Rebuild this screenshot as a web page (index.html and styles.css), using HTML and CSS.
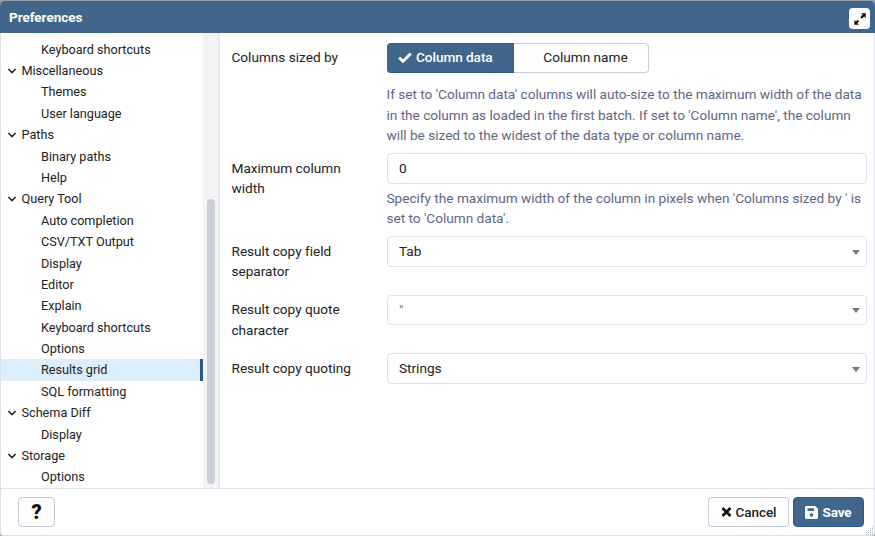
FILE: index.html
```
<!DOCTYPE html>
<html lang="en">
<head>
<meta charset="utf-8">
<title>Preferences</title>
<link rel="stylesheet" href="styles.css">
</head>
<body>
<svg class="defs" aria-hidden="true">
  <symbol id="chev" viewBox="0 0 10 8"><path d="M1.4 2 5 5.6 8.6 2" fill="none" stroke="#222" stroke-width="1.5"/></symbol>
</svg>
<div class="dialog">
  <header class="titlebar">
    <span class="title">Preferences</span>
    <button class="expand" aria-label="Maximize">
      <svg width="14" height="14" viewBox="0 0 14 14"><path d="M8.1 1.3h4.6v4.6l-1.5-1.5-2.4 2.4-1.6-1.6 2.4-2.4zM5.9 12.7H1.3V8.1l1.5 1.5 1.8-1.8 1.6 1.6-1.8 1.8z" fill="#111"/></svg>
    </button>
  </header>
  <main class="content">
    <nav class="tree">
      <div class="leaf">Keyboard shortcuts</div>
      <div class="node"><svg><use href="#chev"/></svg>Miscellaneous</div>
      <div class="leaf">Themes</div>
      <div class="leaf">User language</div>
      <div class="node"><svg><use href="#chev"/></svg>Paths</div>
      <div class="leaf">Binary paths</div>
      <div class="leaf">Help</div>
      <div class="node"><svg><use href="#chev"/></svg>Query Tool</div>
      <div class="leaf">Auto completion</div>
      <div class="leaf">CSV/TXT Output</div>
      <div class="leaf">Display</div>
      <div class="leaf">Editor</div>
      <div class="leaf">Explain</div>
      <div class="leaf">Keyboard shortcuts</div>
      <div class="leaf">Options</div>
      <div class="leaf selected">Results grid</div>
      <div class="leaf">SQL formatting</div>
      <div class="node"><svg><use href="#chev"/></svg>Schema Diff</div>
      <div class="leaf">Display</div>
      <div class="node"><svg><use href="#chev"/></svg>Storage</div>
      <div class="leaf">Options</div>
    </nav>
    <div class="track"><div class="thumb"></div></div>
    <form class="form">
      <div class="row">
        <label>Columns sized by</label>
        <div>
          <div class="toggle">
            <span class="opt on"><svg width="14" height="12" viewBox="0 0 14 12"><path d="M1.2 5.7 5 9.3 12.8 1.5" fill="none" stroke="#fff" stroke-width="2.8"/></svg>Column data</span>
            <span class="opt">Column name</span>
          </div>
          <p class="help toggle-help">If set to 'Column data' columns will auto-size to the maximum width of the data<br>in the column as loaded in the first batch. If set to 'Column name', the column<br>will be sized to the widest of the data type or column name.</p>
        </div>
      </div>
      <div class="row">
        <label>Maximum column<br>width</label>
        <div>
          <div class="field">0</div>
          <p class="help">Specify the maximum width of the column in pixels when 'Columns sized by ' is<br>set to 'Column data'.</p>
        </div>
      </div>
      <div class="row">
        <label>Result copy field<br>separator</label>
        <div class="field select">Tab</div>
      </div>
      <div class="row">
        <label>Result copy quote<br>character</label>
        <div class="field select quote">"</div>
      </div>
      <div class="row">
        <label>Result copy quoting</label>
        <div class="field select">Strings</div>
      </div>
    </form>
  </main>
  <footer class="footer">
    <button class="btn helpbtn">?</button>
    <div class="actions">
      <button class="btn cancel"><svg width="11" height="12" viewBox="0 0 11 12"><path d="M1.5 2 9.5 10M9.5 2 1.5 10" stroke="#111" stroke-width="2.7"/></svg>Cancel</button>
      <button class="btn save"><svg width="13" height="13" viewBox="0 0 13 13"><path fill="#fff" fill-rule="evenodd" d="M1.5 0h8.7L13 2.8v8.7a1.5 1.5 0 0 1-1.5 1.5h-10A1.5 1.5 0 0 1 0 11.5V1.5A1.5 1.5 0 0 1 1.5 0zM2.5 2.3v2.7h6.5V2.3zM6.5 7.2a1.8 1.8 0 1 0 0 3.6 1.8 1.8 0 0 0 0-3.6z"/></svg>Save</button>
    </div>
  </footer>
  <svg class="grip" width="9" height="9" viewBox="0 0 9 9" fill="#aaacb0"><path d="M7 0h1v1H7zM5 2h1v1H5zM7 2h1v1H7zM3 4h1v1H3zM5 4h1v1H5zM7 4h1v1H7zM1 6h1v1H1zM3 6h1v1H3zM5 6h1v1H5zM7 6h1v1H7zM1 8h1v1H1zM3 8h1v1H3zM5 8h1v1H5zM7 8h1v1H7z"/></svg>
</div>
</body>
</html>
```
FILE: styles.css
```
* { box-sizing: border-box; }
body { margin: 0; background: #999da1; font-family: Roboto, "Liberation Sans", sans-serif; font-size: 13.65px; letter-spacing: -0.02px; color: #222; }
.defs { position: absolute; width: 0; height: 0; }
.dialog { position: relative; width: 875px; height: 536px; padding-top: 1px; display: flex; flex-direction: column; }
.titlebar { height: 32px; flex: none; display: flex; align-items: center; justify-content: space-between; padding: 0 5px 0 9px; background: #40668c; border-radius: 5px 5px 0 0; color: #fff; }
.title { font-size: 13.5px; font-weight: 700; letter-spacing: -0.03px; line-height: 30px; }
.expand { width: 21px; height: 21px; margin-top: 3px; padding: 0; border: 0; border-radius: 4px; background: #fff; display: flex; align-items: center; justify-content: center; }
.content { height: 455px; flex: none; display: flex; background: #fff; border: solid #dde0e6; border-width: 0 1px; }
.tree { width: 202px; padding-top: 5.6px; font-size: 12.7px; letter-spacing: -0.02px; }
.leaf, .node { height: 21.4px; line-height: 21.4px; white-space: nowrap; }
.leaf { padding-left: 40px; }
.node { display: flex; align-items: center; padding-left: 6px; gap: 4.5px; }
.node svg { width: 10px; height: 8px; }
.selected { background: #dceefa; border-right: 3px solid #2c5a87; }
.track { width: 17px; padding: 166px 0 4px 4px; background: #f2f3f5; border-right: 2px solid #e8e9ef; }
.thumb { width: 8px; height: 285px; border-radius: 4px; background: #c9ced7; }
.form { flex: 1; padding: 9.7px 7px 0 11.5px; display: flex; flex-direction: column; gap: 8px; }
.row { display: grid; grid-template-columns: 155px 480px; line-height: 20.4px; min-height: 50.4px; }
.row label { padding-top: 4.5px; }
.toggle { display: flex; width: 262px; height: 30px; }
.opt { width: 135px; border: 1px solid #c9cddd; border-left: 0; border-radius: 0 4px 4px 0; display: flex; align-items: center; justify-content: center; padding-left: 10px; }
.opt.on { width: 127px; background: #40668c; border-color: #2c5a87; border-radius: 4px 0 0 4px; color: #fff; font-weight: 500; letter-spacing: -0.08px; gap: 4px; padding-left: 11.5px; justify-content: flex-start; }
.help { margin: 3.6px 0 0; color: #5f6684; white-space: nowrap; }
.toggle-help { margin-top: 11.5px; }
.field { height: 30.5px; border: 1px solid #dfe0e8; border-radius: 4px; padding: 0 11.5px; line-height: 28.5px; }
.select { display: flex; justify-content: space-between; align-items: center; }
.select::after { content: ""; margin: 2px -6px 0 0; border: solid transparent; border-width: 5px 4px 0; border-top-color: #777; }
.quote { color: #777; }
.footer { flex: 1; display: flex; justify-content: space-between; padding: 8px 10px 0 17px; background: #fff; border: 1px solid #dde0e6; border-radius: 0 0 3px 3px; }
.btn { height: 30px; padding: 0; display: flex; align-items: center; justify-content: center; font: 500 13.5px Roboto, "Liberation Sans", sans-serif; letter-spacing: -0.08px; border: 1px solid #c4c9d8; border-radius: 4px; background: #fff; color: #222; }
.helpbtn { width: 37px; font-size: 20px; font-weight: 900; color: #111; }
.actions { display: flex; gap: 4px; }
.cancel { width: 81px; gap: 4px; }
.save { width: 71px; gap: 4px; background: #40668c; border-color: #2c5a87; color: #fff; font-weight: 700; }
.grip { position: absolute; right: 1px; bottom: 1px; }
```
